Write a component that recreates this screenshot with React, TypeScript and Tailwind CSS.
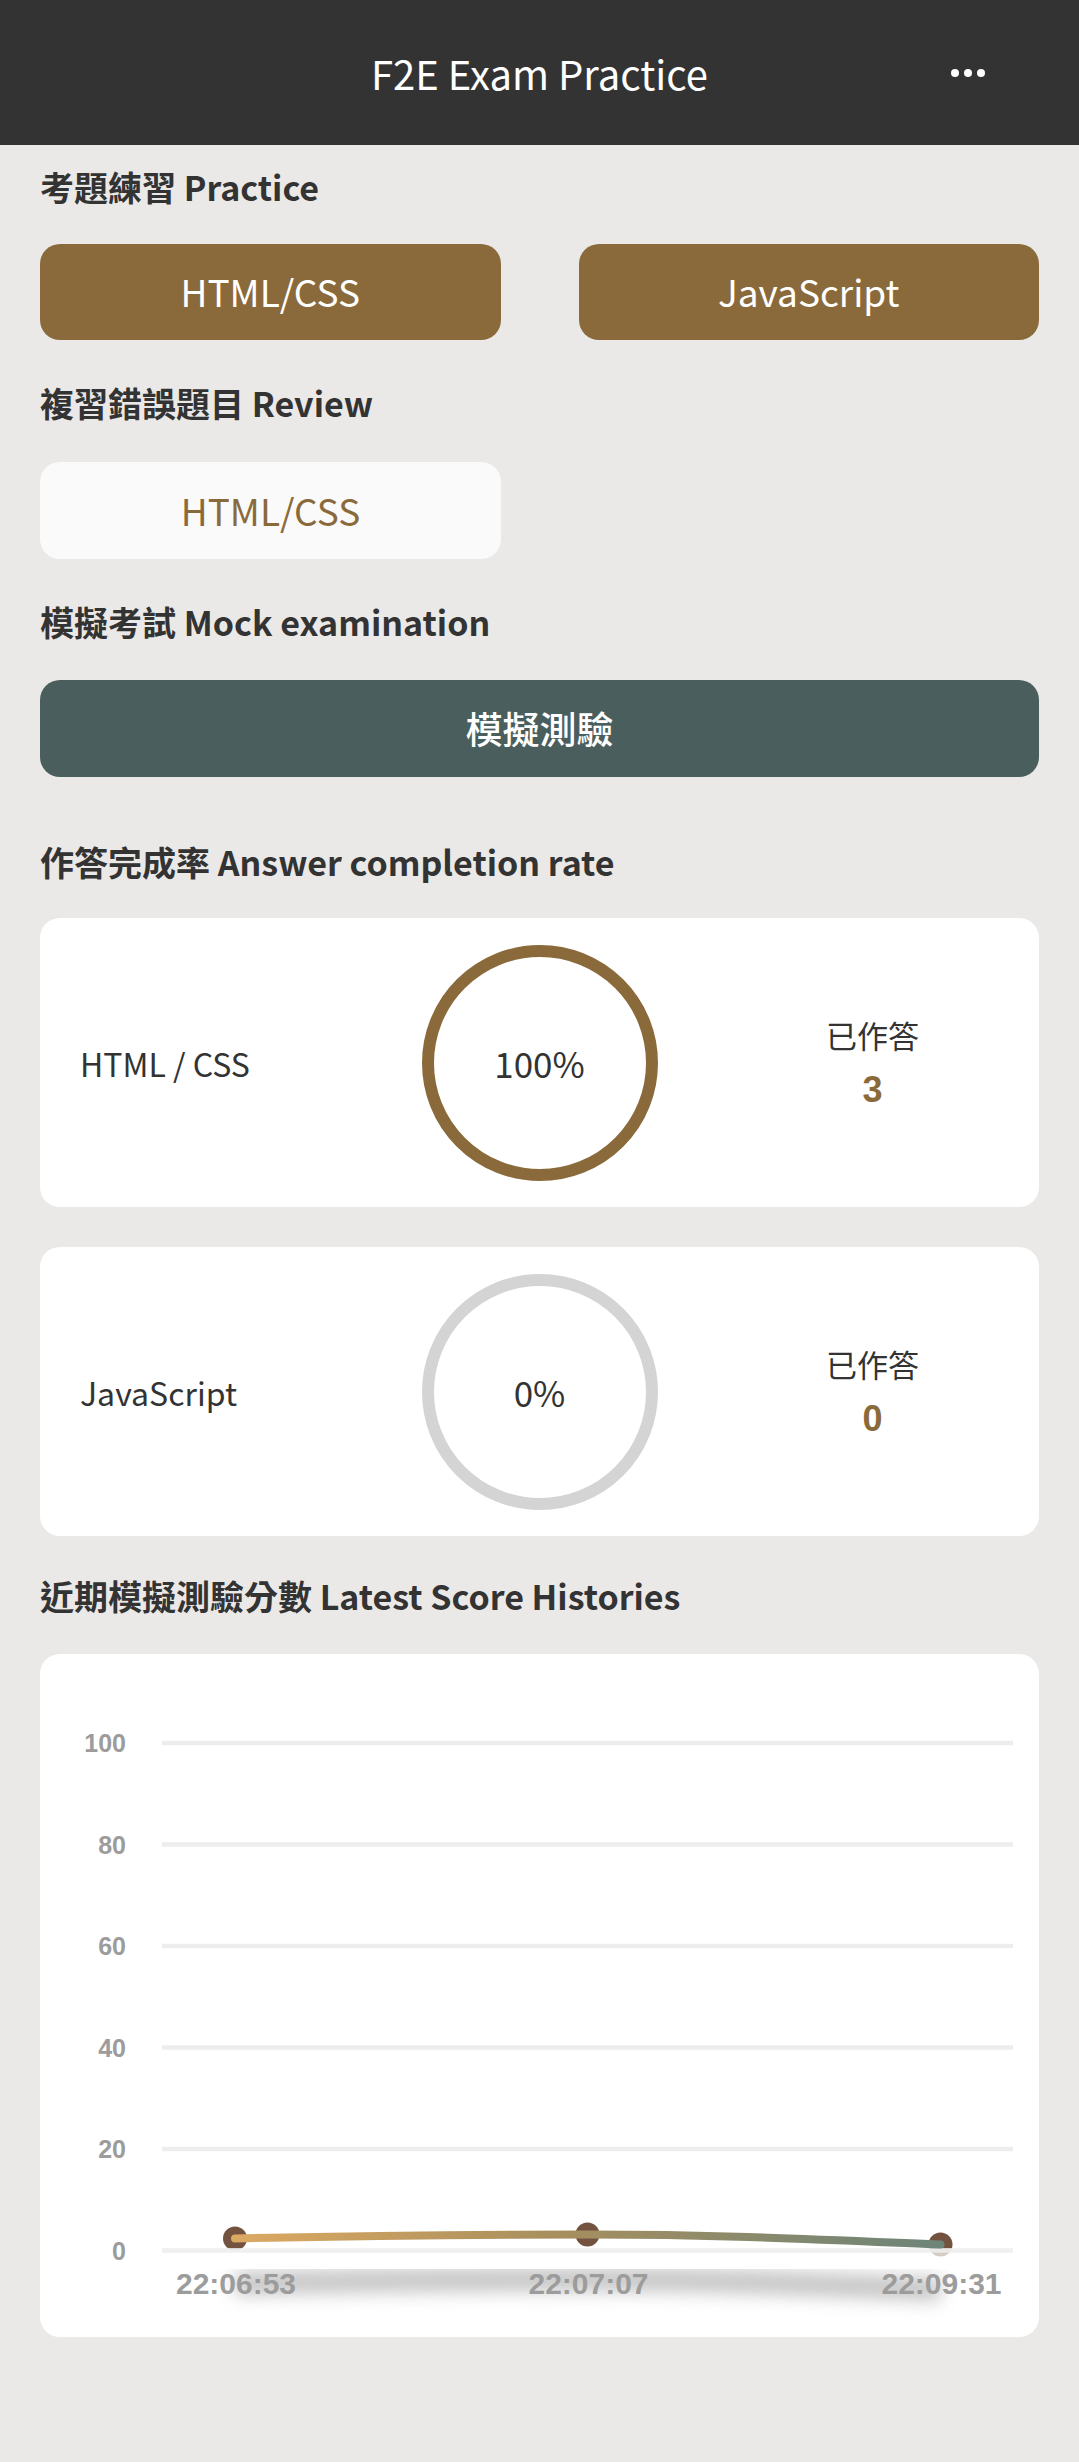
import React from "react";

function SectionTitle({ children, className = "" }: { children: React.ReactNode; className?: string }) {
  return (
    <h2 className={`h-[36px] text-[34px] font-bold leading-[36px] text-[#333333] ${className}`}>{children}</h2>
  );
}

function RateCard({
  label,
  pct,
  count,
  done,
  className = "",
}: {
  label: string;
  pct: string;
  count: string;
  done: boolean;
  className?: string;
}) {
  return (
    <div className={`grid h-[289px] grid-cols-3 items-center rounded-[20px] bg-white ${className}`}>
      <div className="pl-[40px] text-[32px] leading-none text-[#333333]">{label}</div>
      <div className="flex justify-center">
        <div
          className={`flex h-[236px] w-[236px] items-center justify-center rounded-full border-[12px] text-[35px] leading-none text-[#333333] ${
            done ? "border-[#8A6A3A]" : "border-[#D4D4D4]"
          }`}
        >
          {pct}
        </div>
      </div>
      <div className="flex flex-col items-center">
        <div className="text-[31px] leading-[36px] text-[#333333]">已作答</div>
        <div className="mt-[19px] font-['Liberation_Sans',sans-serif] text-[36px] font-bold leading-[36px] text-[#8A6A3A]">
          {count}
        </div>
      </div>
    </div>
  );
}

function Chart() {
  const grid = [
    { v: "100", y: 89 },
    { v: "80", y: 190.5 },
    { v: "60", y: 292 },
    { v: "40", y: 393.5 },
    { v: "20", y: 495 },
    { v: "0", y: 596.5 },
  ];
  const pts = [
    { x: 195, y: 584.5, t: "22:06:53" },
    { x: 547.5, y: 580.5, t: "22:07:07" },
    { x: 900.5, y: 590.5, t: "22:09:31" },
  ];
  const d = "M195,584.5 C300,582 420,580.5 547.5,580.5 C680,580.5 780,585.5 900.5,590.5";
  const dShadow = "M195,629.5 C300,627 420,625.5 547.5,625.5 C680,625.5 780,630.5 900.5,635.5";
  return (
    <svg width="999" height="683" viewBox="0 0 999 683" className="block">
      <defs>
        <linearGradient id="lg" x1="195" y1="0" x2="900" y2="0" gradientUnits="userSpaceOnUse">
          <stop offset="0" stopColor="#DCA962" />
          <stop offset="0.45" stopColor="#A88F5E" />
          <stop offset="1" stopColor="#6D8479" />
        </linearGradient>
        <filter id="blur" x="-20%" y="-300%" width="140%" height="700%">
          <feGaussianBlur stdDeviation="9" />
        </filter>
        <clipPath id="shclip">
          <rect x="0" y="615" width="999" height="60" />
        </clipPath>
      </defs>
      {grid.map((g) => (
        <g key={g.v}>
          <rect x="122" y={g.y - 2.25} width="851" height="4.5" fill="#EDEDED" />
          <text
            x="86"
            y={g.y + 9}
            textAnchor="end"
            fontFamily="Liberation Sans, Arial, sans-serif"
            fontWeight="700"
            fontSize="25"
            fill="#9C9C9C"
          >
            {g.v}
          </text>
        </g>
      ))}
      <g clipPath="url(#shclip)">
        <path d={dShadow} stroke="#A8A8A8" strokeWidth="22" fill="none" filter="url(#blur)" opacity="0.7" />
      </g>
      {pts.map((p) => (
        <text
          key={p.t}
          x={p.x + 1}
          y="640"
          textAnchor="middle"
          fontFamily="Liberation Sans, Arial, sans-serif"
          fontWeight="700"
          fontSize="30"
          fill="#9C9C9C"
        >
          {p.t}
        </text>
      ))}
      {pts.map((p) => (
        <circle key={p.t + "c"} cx={p.x} cy={p.y} r="12" fill="#73523F" />
      ))}
      <rect x="122" y="594.25" width="851" height="14" fill="#FFFFFF" opacity="0.7" />
      <rect x="122" y="594.25" width="851" height="4.5" fill="#EDEDED" opacity="0.85" />
      <path d={d} stroke="url(#lg)" strokeWidth="8" fill="none" strokeLinecap="round" />
    </svg>
  );
}

export default function App() {
  return (
    <div className="min-h-[2462px] bg-[#EBE9E7] font-['Noto_Sans_CJK_TC','Noto_Sans',sans-serif] text-[#333333]">
      <header className="grid h-[145px] grid-cols-[220px_1fr_220px] items-center bg-[#333333]">
        <div />
        <h1 className="text-center text-[40px] leading-none text-white">F2E Exam Practice</h1>
        <div className="flex justify-end gap-[5px] pr-[94px]">
          <span className="h-[8px] w-[8px] rounded-full bg-white" />
          <span className="h-[8px] w-[8px] rounded-full bg-white" />
          <span className="h-[8px] w-[8px] rounded-full bg-white" />
        </div>
      </header>

      <main className="px-[40px] pb-[126px]">
        <SectionTitle className="mt-[24px]">考題練習 Practice</SectionTitle>
        <div className="mt-[39px] flex gap-[78px]">
          <button className="h-[96px] flex-1 rounded-[20px] bg-[#8A6A3A] text-[37px] text-white">HTML/CSS</button>
          <button className="h-[96px] flex-1 rounded-[20px] bg-[#8A6A3A] text-[37px] text-white">JavaScript</button>
        </div>

        <SectionTitle className="mt-[45px]">複習錯誤題目 Review</SectionTitle>
        <button className="mt-[41px] block h-[97px] w-[461px] rounded-[20px] bg-[#FAFAFA] text-[37px] text-[#8A6A3A]">
          HTML/CSS
        </button>

        <SectionTitle className="mt-[45px]">模擬考試 Mock examination</SectionTitle>
        <button className="mt-[40px] block h-[97px] w-full rounded-[20px] bg-[#4A5F5D] text-[37px] font-medium text-white">
          模擬測驗
        </button>

        <SectionTitle className="mt-[67px]">作答完成率 Answer completion rate</SectionTitle>
        <RateCard className="mt-[38px]" label="HTML / CSS" pct="100%" count="3" done />
        <RateCard className="mt-[40px]" label="JavaScript" pct="0%" count="0" done={false} />

        <SectionTitle className="mt-[42px]">近期模擬測驗分數 Latest Score Histories</SectionTitle>
        <div className="mt-[40px] h-[683px] overflow-hidden rounded-[20px] bg-white">
          <Chart />
        </div>
      </main>
    </div>
  );
}
